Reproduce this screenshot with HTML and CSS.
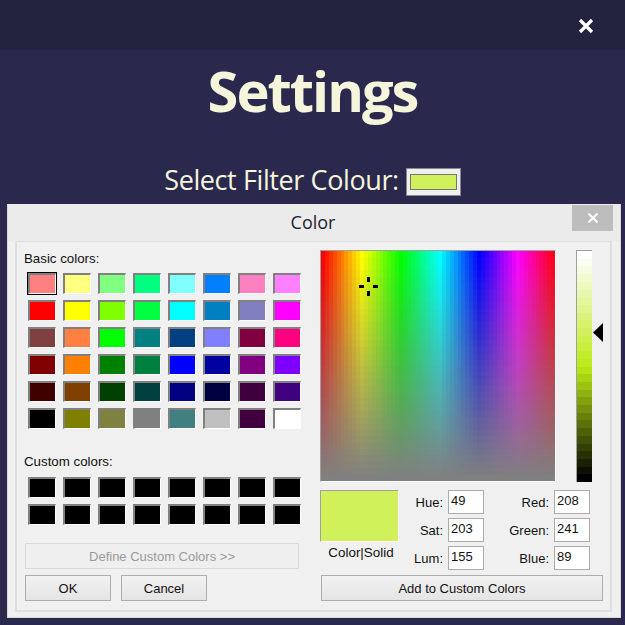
FILE: index.html
```html
<!DOCTYPE html>
<html lang="en">
<head>
<meta charset="utf-8">
<title>Settings</title>
<link rel="stylesheet" href="styles.css">
</head>
<body>
<header class="topbar">
  <svg class="close-icon" width="16" height="16" viewBox="0 0 16 16"><path d="M2 2 L14 14 M14 2 L2 14" stroke="#fff" stroke-width="3.2" fill="none"/></svg>
</header>
<main class="settings">
  <h1 class="settings-title">Settings</h1>
  <div class="filter-row">
    <span class="filter-label">Select Filter Colour:</span>
    <button class="filter-button"><span class="filter-chip"></span></button>
  </div>
</main>
<section class="dialog">
  <div class="dialog-titlebar">
    <span class="dialog-title">Color</span>
    <div class="dialog-close"><svg width="12" height="10" viewBox="0 0 12 10"><path d="M1.5 .5 L10.5 9.5 M10.5 .5 L1.5 9.5" stroke="#fff" stroke-width="2" fill="none"/></svg></div>
  </div>
  <div class="panel">
    <div class="left-col">
      <div class="group-label">Basic colors:</div>
      <div class="swatches basic">
        <div class="swatch selected" style="background:#ff8080"></div><div class="swatch" style="background:#ffff80"></div><div class="swatch" style="background:#80ff80"></div><div class="swatch" style="background:#00ff80"></div><div class="swatch" style="background:#80ffff"></div><div class="swatch" style="background:#0080ff"></div><div class="swatch" style="background:#ff80c0"></div><div class="swatch" style="background:#ff80ff"></div>
        <div class="swatch" style="background:#ff0000"></div><div class="swatch" style="background:#ffff00"></div><div class="swatch" style="background:#80ff00"></div><div class="swatch" style="background:#00ff40"></div><div class="swatch" style="background:#00ffff"></div><div class="swatch" style="background:#0080c0"></div><div class="swatch" style="background:#8080c0"></div><div class="swatch" style="background:#ff00ff"></div>
        <div class="swatch" style="background:#804040"></div><div class="swatch" style="background:#ff8040"></div><div class="swatch" style="background:#00ff00"></div><div class="swatch" style="background:#008080"></div><div class="swatch" style="background:#004080"></div><div class="swatch" style="background:#8080ff"></div><div class="swatch" style="background:#800040"></div><div class="swatch" style="background:#ff0080"></div>
        <div class="swatch" style="background:#800000"></div><div class="swatch" style="background:#ff8000"></div><div class="swatch" style="background:#008000"></div><div class="swatch" style="background:#008040"></div><div class="swatch" style="background:#0000ff"></div><div class="swatch" style="background:#0000a0"></div><div class="swatch" style="background:#800080"></div><div class="swatch" style="background:#8000ff"></div>
        <div class="swatch" style="background:#400000"></div><div class="swatch" style="background:#804000"></div><div class="swatch" style="background:#004000"></div><div class="swatch" style="background:#004040"></div><div class="swatch" style="background:#000080"></div><div class="swatch" style="background:#000040"></div><div class="swatch" style="background:#400040"></div><div class="swatch" style="background:#400080"></div>
        <div class="swatch" style="background:#000000"></div><div class="swatch" style="background:#808000"></div><div class="swatch" style="background:#808040"></div><div class="swatch" style="background:#808080"></div><div class="swatch" style="background:#408080"></div><div class="swatch" style="background:#c0c0c0"></div><div class="swatch" style="background:#400040"></div><div class="swatch" style="background:#ffffff"></div>
      </div>
      <div class="group-label custom-label">Custom colors:</div>
      <div class="swatches custom">
        <div class="swatch"></div><div class="swatch"></div><div class="swatch"></div><div class="swatch"></div><div class="swatch"></div><div class="swatch"></div><div class="swatch"></div><div class="swatch"></div>
        <div class="swatch"></div><div class="swatch"></div><div class="swatch"></div><div class="swatch"></div><div class="swatch"></div><div class="swatch"></div><div class="swatch"></div><div class="swatch"></div>
      </div>
      <button class="btn btn-disabled">Define Custom Colors &gt;&gt;</button>
      <div class="btn-row">
        <button class="btn btn-small">OK</button>
        <button class="btn btn-small">Cancel</button>
      </div>
    </div>
    <div class="right-col">
      <div class="pickers">
        <div class="spectrum">
          <canvas id="spectrum" width="234" height="230"></canvas>
          <svg class="crosshair" width="19" height="19" viewBox="0 0 19 19"><path d="M8 0h3v5H8zM8 14h3v5H8zM0 8h5v3H0zM14 8h5v3h-5z" fill="#000"/></svg>
        </div>
        <div class="lum">
          <canvas id="lum" width="15" height="231"></canvas>
          <svg class="lum-arrow" width="10" height="19" viewBox="0 0 10 19"><polygon points="0,9.5 10,0 10,19" fill="#000"/></svg>
        </div>
      </div>
      <div class="values">
        <div class="preview-col">
          <div class="preview"></div>
          <div class="preview-label">Color|Solid</div>
        </div>
        <div class="fields fields-hsl">
          <label class="field-label">Hue:</label><div class="field">49</div>
          <label class="field-label">Sat:</label><div class="field">203</div>
          <label class="field-label">Lum:</label><div class="field">155</div>
        </div>
        <div class="fields fields-rgb">
          <label class="field-label">Red:</label><div class="field">208</div>
          <label class="field-label">Green:</label><div class="field">241</div>
          <label class="field-label">Blue:</label><div class="field">89</div>
        </div>
      </div>
      <button class="btn btn-add">Add to Custom Colors</button>
    </div>
  </div>
</section>
<script src="app.js"></script>
</body>
</html>
```

FILE: styles.css
```css
* { box-sizing: border-box; }
html, body { margin: 0; height: 625px; overflow: hidden; }
body { background: #2a284d; font-family: "Liberation Sans", Arial, sans-serif; position: relative; }

.topbar { height: 50px; background: #23223f; display: flex; justify-content: flex-end; align-items: center; padding: 0 31px 0 0; }
.close-icon { display: block; margin-top: 2px; }

.settings { display: flex; flex-direction: column; align-items: center; color: #f5f5dc; font-family: "Open Sans", sans-serif; }
.settings-title { margin: 0; font-size: 56px; line-height: 80px; font-weight: 700; height: 80px; letter-spacing: -2px; }
.filter-row { display: flex; align-items: center; gap: 7px; margin-top: 38px; height: 28px; }
.filter-label { font-size: 27px; line-height: 28px; letter-spacing: -.4px; margin-top: -4px; }
.filter-button { width: 55px; height: 28px; padding: 0; background: #efefef; border: 1px solid #8a8a8a; display: flex; align-items: center; justify-content: center; }
.filter-chip { display: block; width: 47px; height: 16px; background: #d0f159; border: 1px solid #767676; }

.dialog { position: absolute; left: 7px; top: 204px; width: 614px; height: 414px; background: #f0f0f0; border: 1px solid #d8d8d8; border-top-color: #ebebeb; display: flex; flex-direction: column; }
.dialog-titlebar { height: 36px; background: #ebebeb; display: flex; align-items: center; justify-content: center; position: relative; flex: none; }
.dialog-title { font-family: "Open Sans", sans-serif; font-size: 18px; color: #1e1e2e; margin: -2px 0 0 -2px; }
.dialog-close { position: absolute; right: 7px; top: 0; width: 41px; height: 26px; background: #bdbdbd; display: flex; align-items: center; justify-content: center; }

.panel { margin: 0 8px 0 7px; height: 371px; border: 2px solid #dedede; border-top-width: 1px; display: flex; font-size: 13px; color: #111; }

.left-col { width: 284px; margin-left: 7px; margin-top: 10px; flex: none; }
.group-label { height: 14px; line-height: 14px; font-size: 13.3px; }
.swatches { display: grid; grid-template-columns: repeat(8, 28px); grid-auto-rows: 21px; column-gap: 7px; row-gap: 6px; margin-left: 4px; }
.basic { margin-top: 7px; }
.custom { margin-top: 8px; }
.custom-label { margin-top: 26px; }
.swatch { background: #000; border-style: solid; border-width: 2px 1px 1px 2px; border-color: #808080 #fff #fff #808080; }
.selected { outline: 1px solid #000; outline-offset: 0; }

.btn { display: block; font-family: "Liberation Sans", Arial, sans-serif; font-size: 13px; color: #111; height: 26px; padding: 0; border: 1px solid #adadad; background: linear-gradient(#f1f1f1, #e5e5e5); }
.btn-disabled { width: 274px; margin: 18px 0 0 1px; background: #efefef; border-color: #d9d9d9; color: #9a9a9a; }
.btn-row { display: flex; gap: 10px; margin: 6px 0 0 1px; }
.btn-small { width: 86px; }

.right-col { width: 283px; margin-left: 12px; margin-top: 8px; flex: none; }
.pickers { display: flex; height: 232px; }
.spectrum { position: relative; width: 236px; height: 232px; border-style: solid; border-width: 1px; border-color: #a0a0a0 #fff #fff #a0a0a0; flex: none; }
.spectrum canvas, .lum canvas { display: block; }
.crosshair { position: absolute; left: 38px; top: 26px; }
.lum { position: relative; width: 16px; height: 232px; margin-left: 20px; border-style: solid; border-width: 1px 0 0 1px; border-color: #a0a0a0; flex: none; }
.lum-arrow { position: absolute; left: 16px; top: 72px; }

.values { display: flex; margin-top: 8px; }
.preview-col { width: 79px; flex: none; }
.preview { height: 52px; background: #d0f159; border-style: solid; border-width: 1px; border-color: #a0a0a0 #fff #fff #a0a0a0; }
.preview-label { text-align: center; font-size: 13.4px; line-height: 14px; margin-top: 4px; margin-left: 3px; }
.fields { display: grid; grid-template-columns: auto 36px; grid-auto-rows: 24px; row-gap: 4px; align-items: center; column-gap: 5px; flex: none; font-size: 13px; }
.fields-hsl { width: 85px; justify-content: end; }
.fields-rgb { width: 106px; justify-content: end; }
.field-label { text-align: right; margin-top: 1px; }
.field { height: 24px; border: 1px solid #ababab; background: #fff; padding: 3px 0 0 2px; line-height: 14px; }

.btn-add { width: 282px; margin: 5px 0 0 1px; }
```

FILE: app.js
```js
function hsl(h, s, l) {
  return "hsl(" + h + "," + s + "%," + l + "%)";
}
var spectrum = document.getElementById("spectrum").getContext("2d");
var cols = 60, rows = 36;
for (var y = 0; y < rows; y++) {
  for (var x = 0; x < cols; x++) {
    spectrum.fillStyle = hsl(x / cols * 360, 100 - y / (rows - 1) * 100, 50);
    var px = Math.round(x * 234 / cols), qx = Math.round((x + 1) * 234 / cols);
    var py = Math.round(y * 230 / rows), qy = Math.round((y + 1) * 230 / rows);
    spectrum.fillRect(px, py, qx - px, qy - py);
  }
}
var lum = document.getElementById("lum").getContext("2d");
var steps = 30;
for (var i = 0; i < steps; i++) {
  lum.fillStyle = hsl(73.5, 84.6, 100 - i / (steps - 1) * 100);
  var a = Math.round(i * 231 / steps), b = Math.round((i + 1) * 231 / steps);
  lum.fillRect(0, a, 15, b - a);
}
```
